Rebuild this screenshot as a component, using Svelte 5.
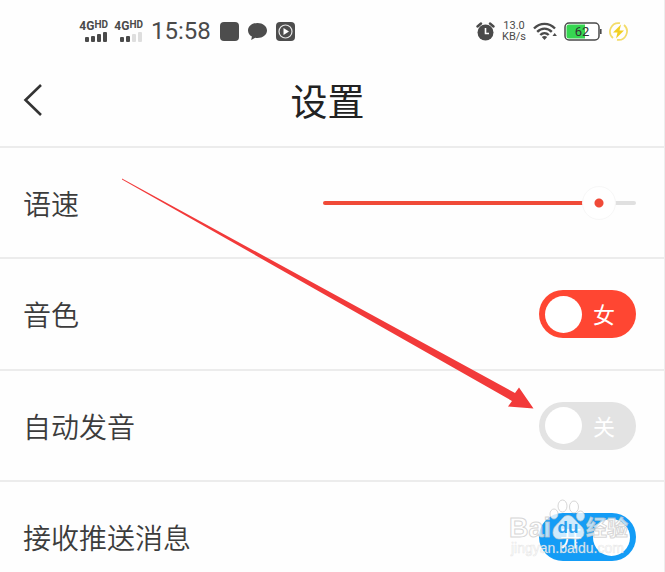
<script lang="ts">
  let speed = $state(93);

  let rows = $state([
    { id: 'voice', label: '音色', on: '男', off: '女', checked: false, tone: 'red' },
    { id: 'auto', label: '自动发音', on: '开', off: '关', checked: false, tone: 'gray' },
    { id: 'push', label: '接收推送消息', on: '开', off: '关', checked: true, tone: 'gray' }
  ]);

  // bar heights of the two sim cards
  const sims = [4, 2];
  const bars = [5, 6, 8, 10];
</script>

<div class="screen">
  <div class="statusbar">
    <div class="status-left">
      {#each sims as strength}
        <div class="sim">
          <span class="net">4G<small>HD</small></span>
          <svg width="24" height="10" viewBox="0 0 24 10">
            {#each bars as h, i}
              <rect x={i * 6 + 1} y={10 - h} width="4" height={h} rx="1" fill={i < strength ? '#4a4a4a' : '#dedede'} />
            {/each}
          </svg>
        </div>
      {/each}
      <span class="time">15:58</span>
      <svg width="19" height="19" viewBox="0 0 19 19"><rect width="19" height="19" rx="4" fill="#4d4d4d" /></svg>
      <svg width="19" height="19" viewBox="0 0 19 19">
        <path d="M9.500 1C4.200 1 0 4.200 0 8.500c0 2.500 1.500 4.800 3.900 6.100L3.200 18l4-2.200c.7.100 1.500.2 2.300.2 5.300 0 9.500-3.300 9.500-7.500S14.800 1 9.500 1z" fill="#4d4d4d" />
      </svg>
      <svg width="19" height="19" viewBox="0 0 19 19">
        <rect width="19" height="19" rx="4" fill="#4d4d4d" />
        <circle cx="9.500" cy="9.500" r="6.500" fill="none" stroke="#e8e8e8" stroke-width="1.200" />
        <path d="M7.500 6v7l5.500-3.500z" fill="#fff" />
      </svg>
    </div>
    <div class="status-right">
      <svg width="19" height="19" viewBox="0 0 19 19">
        <circle cx="9.500" cy="10.500" r="8" fill="#4a4a4a" />
        <path d="M1.500 4.500l3.500-3M17.500 4.500l-3.500-3" stroke="#4a4a4a" stroke-width="2.400" stroke-linecap="round" />
        <path d="M9.500 6v5.500h3.500" fill="none" stroke="#fff" stroke-width="1.600" />
      </svg>
      <span class="rate"><span>13.0</span><span>KB/s</span></span>
      <svg width="24" height="18" viewBox="0 0 24 18">
        <g fill="none" stroke="#4a4a4a" stroke-width="2.400">
          <path d="M1 6.500C7 .3 16 .3 22 6.500" />
          <path d="M4.200 9.800c4.200-4.200 10.400-4.200 14.600 0" />
          <path d="M7.300 13c2.400-2.400 6-2.400 8.400 0" />
        </g>
        <path d="M8.800 15l2.700 3 2.700-3c-1.500-1.400-3.900-1.400-5.400 0z" fill="#4a4a4a" />
        <path d="M19.500 14l2.200-3 2.200 3z" fill="#4a4a4a" />
      </svg>
      <svg class="battery" width="38" height="19" viewBox="0 0 38 19">
        <rect x="1" y="1" width="34" height="17" rx="4" fill="#fff" stroke="#4a4a4a" stroke-width="1.500" />
        <path d="M5 2.500h16v14H5a2.500 2.500 0 0 1-2.500-2.500V5A2.500 2.500 0 0 1 5 2.500z" fill="#36d651" />
        <path d="M36.800 7v5" stroke="#4a4a4a" stroke-width="1.600" />
        <text x="18" y="14" text-anchor="middle" font-size="13" fill="#333">62</text>
      </svg>
      <svg width="19" height="19" viewBox="0 0 19 19">
        <path d="M11 1.200A8.500 8.500 0 0 0 4 16M8 17.800A8.500 8.500 0 0 0 15 3" fill="none" stroke="#f3dc6a" stroke-width="1.700" />
        <path d="M12 2.500L4 10.500h4.500L7 16.500l8-8h-4.500z" fill="#f2cf22" />
      </svg>
    </div>
  </div>

  <header>
    <button class="back" type="button" aria-label="返回">
      <svg width="20" height="34" viewBox="0 0 20 34">
        <path d="M18 2L2.500 17 18 32" fill="none" stroke="#333" stroke-width="2.600" />
      </svg>
    </button>
    <h1>设置</h1>
  </header>

  <div class="row">
    <label for="speed">语速</label>
    <input id="speed" class="slider" type="range" min="0" max="100" bind:value={speed} style="--pos: {speed}%" />
  </div>

  {#each rows as row (row.id)}
    <div class="row">
      <label for={row.id}>{row.label}</label>
      <label class="switch {row.tone}" class:on={row.checked}>
        <input id={row.id} type="checkbox" role="switch" bind:checked={row.checked} />
        <span class="knob"></span>
        <span class="state">{row.checked ? row.on : row.off}</span>
      </label>
    </div>
  {/each}

  <svg class="pointer" width="420" height="236" viewBox="120 176 420 236">
    <path d="M122 178.500L515 393l4-5.500 14.500 21-25.500-2 4-5.500L122 179.500z" fill="#f23a3a" />
  </svg>

  <svg class="watermark" width="126" height="64" viewBox="506 496 126 64">
    <g fill="#fff" fill-opacity=".8" stroke="#c4c4c4" stroke-opacity=".7" stroke-width="1">
      <ellipse cx="562.500" cy="506" rx="4.500" ry="6" />
      <ellipse cx="574" cy="507" rx="4.500" ry="6" />
      <ellipse cx="554" cy="514" rx="4" ry="5" />
      <ellipse cx="580.500" cy="516" rx="4" ry="5" />
      <path d="M568 515.500c-5 0-6.500 5-10 8-3 2.500-5 5-5 9 0 5 4 7 8 6.500 5-.6 9-.6 14 0 5 .6 9-1.500 9-6.500 0-4-2.500-6.500-5.500-9-3.500-3-5.500-8-10.500-8z" />
    </g>
    <g fill="#fff" fill-opacity=".7" stroke="#c4c4c4" stroke-opacity=".7" stroke-width="1" font-weight="bold">
      <text x="509" y="537" font-size="27">Bai</text>
      <text x="586" y="535" font-size="21">经验</text>
    </g>
    <text x="568" y="533" text-anchor="middle" font-size="17" font-weight="bold" fill="#2a9fec">du</text>
    <text x="511" y="553" font-size="14" fill="#fff" fill-opacity=".85" stroke="#c4c4c4" stroke-opacity=".4" stroke-width=".6">jingyan.baidu.com</text>
  </svg>
</div>

<style>
  :global(body) {
    margin: 0;
    background: #fefefe;
  }
  .screen {
    position: relative;
    height: 100vh;
    box-sizing: border-box;
    overflow: hidden;
    border-right: 1px solid #ededed;
    color: #3c3c3c;
    font-family: "Noto Sans CJK SC", sans-serif;
  }
  .statusbar {
    display: flex;
    justify-content: space-between;
    align-items: center;
    height: 62px;
    padding: 0 36px 0 79px;
    font-family: Roboto, sans-serif;
    color: #4a4a4a;
  }
  .status-left, .status-right {
    display: flex;
    align-items: center;
    gap: 9px;
  }
  .status-right {
    gap: 7px;
  }
  .sim {
    display: flex;
    flex-direction: column;
    align-items: flex-end;
    width: 29px;
    margin-right: -3px;
  }
  .net {
    display: flex;
    font-size: 12px;
    line-height: 11px;
    font-weight: bold;
  }
  .net small {
    font-size: 10px;
    line-height: 8px;
  }
  .time {
    margin-left: 2px;
    font-size: 24px;
    line-height: 28px;
  }
  .rate {
    display: flex;
    flex-direction: column;
    align-items: center;
    gap: 1px;
    font-size: 11px;
    line-height: 10px;
  }
  .battery {
    font-family: Roboto, sans-serif;
  }
  header {
    display: grid;
    grid-template-columns: 60px 1fr 60px;
    align-items: center;
    height: 84px;
    padding-right: 9px;
  }
  .back {
    display: flex;
    align-items: center;
    height: 60px;
    margin-bottom: 8px;
    padding: 0 0 0 23px;
    border: 0;
    background: none;
    cursor: pointer;
  }
  h1 {
    margin: 0 0 8px;
    text-align: center;
    font-size: 37px;
    line-height: 52px;
    font-weight: 400;
    color: #222;
  }
  .row {
    display: flex;
    align-items: center;
    justify-content: space-between;
    box-sizing: border-box;
    height: 112px;
    border-top: 2px solid #ececec;
    padding: 0 28px 0 23px;
    font-size: 28px;
    line-height: 40px;
    font-weight: 350;
  }
  .row:nth-child(odd) {
    height: 111px;
  }
  .slider {
    appearance: none;
    width: 51%;
    height: 34px;
    margin: 0;
    background: none;
    cursor: pointer;
  }
  .slider::-webkit-slider-runnable-track {
    height: 4px;
    border-radius: 2px;
    background: linear-gradient(to right, #f04a38 var(--pos), #e0e0e0 var(--pos));
  }
  .slider::-webkit-slider-thumb {
    appearance: none;
    width: 34px;
    height: 34px;
    margin-top: -15px;
    border: 1px solid #f7f7f7;
    border-radius: 50%;
    background: radial-gradient(circle, #f04a38 4px, #fff 5px);
  }
  .switch {
    display: flex;
    align-items: center;
    gap: 11px;
    box-sizing: border-box;
    width: 97px;
    height: 48px;
    padding: 0 6px;
    border-radius: 24px;
    background: #e3e3e3;
    color: #fff;
    font-size: 22px;
    line-height: 32px;
    font-weight: 400;
    cursor: pointer;
  }
  .switch input {
    position: absolute;
    opacity: 0;
  }
  .state {
    padding-bottom: 2px;
  }
  .knob {
    width: 37px;
    height: 37px;
    border-radius: 50%;
    background: #fff;
  }
  .red {
    background: #ff4632;
  }
  .on {
    flex-direction: row-reverse;
    background: #139cf6;
  }
  .pointer {
    position: absolute;
    left: 120px;
    top: 176px;
    pointer-events: none;
  }
  .watermark {
    position: absolute;
    right: 32px;
    top: 496px;
    font-family: "Liberation Sans", "Noto Sans CJK SC", sans-serif;
    pointer-events: none;
  }
</style>
